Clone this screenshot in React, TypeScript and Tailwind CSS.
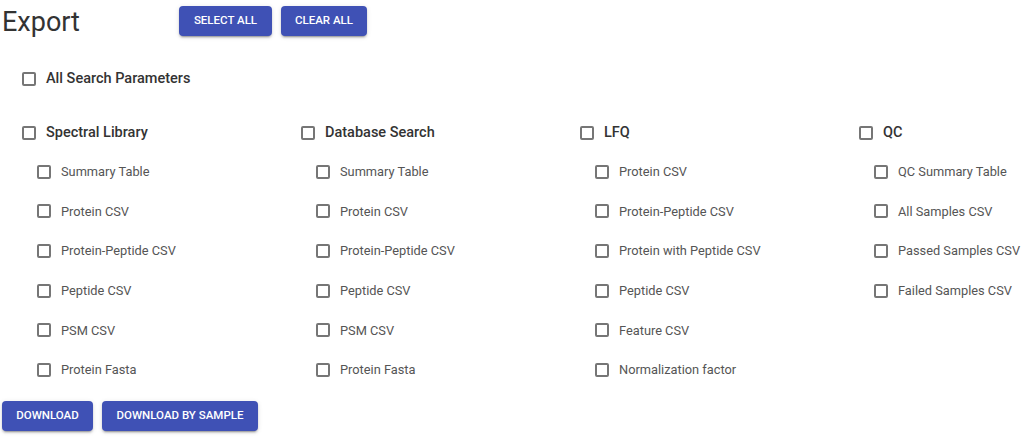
const columns = [
  {
    title: 'Spectral Library',
    items: ['Summary Table', 'Protein CSV', 'Protein-Peptide CSV', 'Peptide CSV', 'PSM CSV', 'Protein Fasta'],
  },
  {
    title: 'Database Search',
    items: ['Summary Table', 'Protein CSV', 'Protein-Peptide CSV', 'Peptide CSV', 'PSM CSV', 'Protein Fasta'],
  },
  {
    title: 'LFQ',
    items: ['Protein CSV', 'Protein-Peptide CSV', 'Protein with Peptide CSV', 'Peptide CSV', 'Feature CSV', 'Normalization factor'],
  },
  {
    title: 'QC',
    items: ['QC Summary Table', 'All Samples CSV', 'Passed Samples CSV', 'Failed Samples CSV'],
  },
];

const Box = () => (
  <span className="inline-block w-[14px] h-[14px] border-2 border-[#767676] rounded-[2px] shrink-0" />
);

const Btn = ({ label, className }: { label: string; className: string }) => (
  <button
    className={`h-[30px] bg-[#3f51b5] text-white text-[11.5px] font-medium uppercase rounded-[4px] shadow-[0_3px_1px_-2px_rgba(0,0,0,0.2),0_2px_2px_0_rgba(0,0,0,0.14),0_1px_5px_0_rgba(0,0,0,0.12)] ${className}`}
  >
    {label}
  </button>
);

export default function App() {
  return (
    <div className="w-[1033px] h-[438px] bg-white overflow-hidden font-['Roboto',sans-serif]">
      {/* Title bar */}
      <div className="h-[59px] pt-[6px] flex items-start">
        <h1 className="ml-[2px] h-[32px] leading-[32px] text-[27px] font-normal text-[#333] w-[177px]">Export</h1>
        <div className="flex gap-[9px]">
          <Btn label="Select All" className="w-[93px]" />
          <Btn label="Clear All" className="w-[86px]" />
        </div>
      </div>

      <label className="h-[40px] pl-[22px] flex items-center gap-[10px]">
        <Box />
        <span className="text-[14.5px] font-medium text-[#333]">All Search Parameters</span>
      </label>

      <div className="mt-[13px] pl-[22px] flex">
        {columns.map((col) => (
          <div key={col.title} className="w-[279px] shrink-0">
            <label className="h-[40px] pt-[1px] flex items-center gap-[10px]">
              <Box />
              <span className="text-[14.5px] font-medium text-[#333]">{col.title}</span>
            </label>
            {col.items.map((item) => (
              <label key={item} className="h-[39.6px] pl-[15px] flex items-center gap-[10px]">
                <Box />
                <span className="text-[12.8px] text-[#555] whitespace-nowrap">{item}</span>
              </label>
            ))}
          </div>
        ))}
      </div>

      <div className="mt-[11px] ml-[2px] flex gap-[9px]">
        <Btn label="Download" className="w-[91px]" />
        <Btn label="Download by Sample" className="w-[156px]" />
      </div>
    </div>
  );
}
